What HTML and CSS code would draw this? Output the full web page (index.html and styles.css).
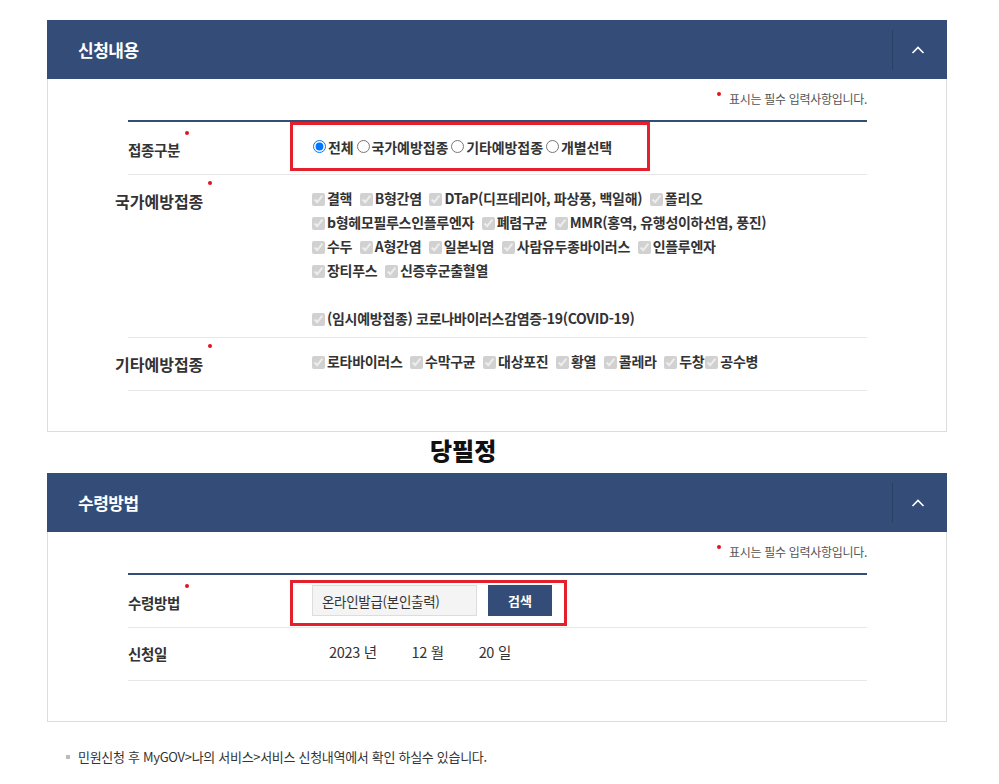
FILE: index.html
```html
<!DOCTYPE html>
<html lang="ko">

<head>
    <meta charset="UTF-8">
    <meta name="viewport" content="width=device-width, initial-scale=1.0">
    <link rel="stylesheet" href="styles.css">
</head>

<body>
    <div class="wrap">
        <!-- 신청내용 -->
        <section class="panel">
            <div class="panel-head">
                <h2>신청내용</h2>
                <button class="toggle" type="button" aria-label="접기">
                    <svg width="14" height="8" viewBox="0 0 14 8"><polyline points="1.5,7 7,1.5 12.5,7" fill="none" stroke="#fff" stroke-width="1.6"/></svg>
                </button>
            </div>
            <div class="panel-body">
                <p class="req-note"><i class="dot"></i>표시는 필수 입력사항입니다.</p>
                <div class="form-table">
                    <div class="row">
                        <div class="th th-mark"><span class="label">접종구분<i class="dot"></i></span></div>
                        <div class="td td-mark">
                            <div class="mark-box mark-radio">
                                <label class="rdo"><input type="radio" name="kind" checked>전체</label><label class="rdo"><input type="radio" name="kind">국가예방접종</label><label class="rdo"><input type="radio" name="kind">기타예방접종</label><label class="rdo"><input type="radio" name="kind">개별선택</label>
                            </div>
                        </div>
                    </div>
                    <div class="row">
                        <div class="th"><span class="label label-long">국가예방접종<i class="dot"></i></span></div>
                        <div class="td">
                            <div class="chk-line">
                                <label class="chk"><input type="checkbox" checked disabled>결핵</label>
                                <label class="chk"><input type="checkbox" checked disabled>B형간염</label>
                                <label class="chk"><input type="checkbox" checked disabled>DTaP(디프테리아, 파상풍, 백일해)</label>
                                <label class="chk"><input type="checkbox" checked disabled>폴리오</label>
                            </div>
                            <div class="chk-line">
                                <label class="chk"><input type="checkbox" checked disabled>b형헤모필루스인플루엔자</label>
                                <label class="chk"><input type="checkbox" checked disabled>폐렴구균</label>
                                <label class="chk"><input type="checkbox" checked disabled>MMR(홍역, 유행성이하선염, 풍진)</label>
                            </div>
                            <div class="chk-line">
                                <label class="chk"><input type="checkbox" checked disabled>수두</label>
                                <label class="chk"><input type="checkbox" checked disabled>A형간염</label>
                                <label class="chk"><input type="checkbox" checked disabled>일본뇌염</label>
                                <label class="chk"><input type="checkbox" checked disabled>사람유두종바이러스</label>
                                <label class="chk"><input type="checkbox" checked disabled>인플루엔자</label>
                            </div>
                            <div class="chk-line">
                                <label class="chk"><input type="checkbox" checked disabled>장티푸스</label>
                                <label class="chk"><input type="checkbox" checked disabled>신증후군출혈열</label>
                            </div>
                            <div class="chk-line"></div>
                            <div class="chk-line">
                                <label class="chk"><input type="checkbox" checked disabled>(임시예방접종) 코로나바이러스감염증-19(COVID-19)</label>
                            </div>
                        </div>
                    </div>
                    <div class="row">
                        <div class="th"><span class="label label-long">기타예방접종<i class="dot"></i></span></div>
                        <div class="td">
                            <div class="chk-line">
                                <label class="chk"><input type="checkbox" checked disabled>로타바이러스</label>
                                <label class="chk"><input type="checkbox" checked disabled>수막구균</label>
                                <label class="chk"><input type="checkbox" checked disabled>대상포진</label>
                                <label class="chk"><input type="checkbox" checked disabled>황열</label>
                                <label class="chk"><input type="checkbox" checked disabled>콜레라</label>
                                <label class="chk"><input type="checkbox" checked disabled>두창</label><label class="chk chk-tight"><input type="checkbox" checked disabled>공수병</label>
                            </div>
                        </div>
                    </div>
                </div>
            </div>
        </section>

        <div class="stamp">당필정</div>

        <!-- 수령방법 -->
        <section class="panel">
            <div class="panel-head">
                <h2>수령방법</h2>
                <button class="toggle" type="button" aria-label="접기">
                    <svg width="14" height="8" viewBox="0 0 14 8"><polyline points="1.5,7 7,1.5 12.5,7" fill="none" stroke="#fff" stroke-width="1.6"/></svg>
                </button>
            </div>
            <div class="panel-body">
                <p class="req-note"><i class="dot"></i>표시는 필수 입력사항입니다.</p>
                <div class="form-table">
                    <div class="row">
                        <div class="th th-mark"><span class="label">수령방법<i class="dot"></i></span></div>
                        <div class="td td-mark">
                            <div class="mark-box mark-input">
                                <input class="text-input" type="text" value="온라인발급(본인출력)" readonly>
                                <button class="btn" type="button">검색</button>
                            </div>
                        </div>
                    </div>
                    <div class="row">
                        <div class="th"><span class="label">신청일</span></div>
                        <div class="td td-date">
                            <span class="date">2023 년</span>
                            <span class="date">12 월</span>
                            <span class="date">20 일</span>
                        </div>
                    </div>
                </div>
            </div>
        </section>

        <p class="notice">민원신청 후 MyGOV&gt;나의 서비스&gt;서비스 신청내역에서 확인 하실수 있습니다.</p>
    </div>
</body>

</html>
```

FILE: styles.css
```css
/* 기본 */
body {
    margin: 0;
    font-family: "Noto Sans CJK KR", "Noto Sans", sans-serif;
    color: #333;
    background-color: #fff;
}

.wrap {
    width: 900px;
    padding: 20px 0 0 47px;
}

/* 패널 헤더 */
.panel-head {
    display: flex;
    align-items: center;
    height: 59px;
    padding-left: 31px;
    background-color: #344d78;
}

.panel-head h2 {
    flex: 1;
    margin: 0;
    font-size: 17px;
    font-weight: 700;
    letter-spacing: -0.5px;
    color: #fff;
}

.toggle {
    display: flex;
    align-items: center;
    justify-content: center;
    width: 55px;
    height: 40px;
    padding: 0 4px 0 0;
    border: 0;
    border-left: 1px solid #2a3f64;
    background: none;
}

/* 패널 본문 */
.panel-body {
    border: 1px solid #ddd;
    border-top: 0;
    padding: 10px 79px 40px 80px;
}

.req-note {
    margin: 0 0 11px;
    text-align: right;
    font-size: 12px;
    line-height: 20px;
    letter-spacing: -0.3px;
    color: #555;
}

.req-note .dot {
    margin-right: 8px;
    vertical-align: 8px;
}

.dot {
    display: inline-block;
    width: 4px;
    height: 4px;
    border-radius: 50%;
    background-color: #e2141c;
}

/* 폼 테이블 */
.form-table {
    border-top: 2px solid #344d78;
}

.row {
    display: grid;
    grid-template-columns: 162px 1fr;
    align-items: start;
    min-height: 52px;
    border-bottom: 1px solid #e8e8e8;
}

.th {
    padding-top: 16px;
    font-size: 14.5px;
    font-weight: 700;
    line-height: 20px;
    letter-spacing: -0.3px;
    white-space: nowrap;
}

.th-mark {
    padding-top: 18px;
}

.label {
    position: relative;
}

.label-long {
    margin-left: -13px;
    font-size: 16px;
    letter-spacing: 0;
}

.label .dot {
    position: absolute;
    right: -9px;
    top: -8px;
}

.td {
    padding: 11px 0 7px 22px;
    font-size: 14px;
    font-weight: 700;
    line-height: 24px;
    letter-spacing: -0.3px;
}

.td-mark {
    padding: 0;
}

.chk-line {
    height: 24px;
    white-space: nowrap;
}

.chk input {
    width: 13px;
    height: 13px;
    margin: 0 2px 0 0;
    vertical-align: -2px;
}

.chk + .chk {
    margin-left: 4px;
}

.chk + .chk-tight {
    margin-left: 1px;
}

/* 빨간 표시 박스 */
.mark-box {
    box-sizing: border-box;
    display: flex;
    border: 3px solid #e3202b;
}

.mark-radio {
    width: 360px;
    height: 49px;
    margin-bottom: 3px;
    align-items: center;
    padding-left: 20px;
}

.rdo {
    display: flex;
    align-items: center;
    font-size: 14px;
    font-weight: 700;
    letter-spacing: -0.1px;
}

.rdo input {
    width: 13px;
    height: 13px;
    margin: 0 2px 0 3px;
}

.rdo:first-child input {
    margin-left: 0;
}

.mark-input {
    width: 277px;
    height: 46px;
    margin-top: 5px;
    gap: 11px;
    padding: 2px 0 0 19px;
}

.text-input {
    box-sizing: border-box;
    width: 165px;
    height: 31px;
    padding: 0 9px;
    border: 1px solid #ddd;
    background-color: #f4f4f4;
    font-family: inherit;
    font-size: 13.5px;
    letter-spacing: -0.3px;
    color: #333;
}

.btn {
    width: 64px;
    height: 31px;
    padding: 0;
    border: 0;
    background-color: #344d78;
    color: #fff;
    font-family: inherit;
    font-size: 13px;
    font-weight: 700;
}

.td-date {
    padding-top: 12px;
    padding-left: 39px;
    font-size: 14.5px;
    font-weight: 400;
}

.date {
    margin-right: 31px;
}

/* 중간 도장 글씨 */
.stamp {
    height: 41px;
    padding-left: 383px;
    font-size: 24px;
    font-weight: 900;
    line-height: 36px;
    color: #111;
}

/* 안내 문구 */
.notice {
    position: relative;
    margin: 25px 0 0;
    padding-left: 31px;
    font-size: 13px;
    line-height: 20px;
    letter-spacing: -0.3px;
    color: #333;
}

.notice::before {
    content: "";
    position: absolute;
    left: 19px;
    top: 8px;
    width: 4px;
    height: 4px;
    background-color: #bbb;
}
```
